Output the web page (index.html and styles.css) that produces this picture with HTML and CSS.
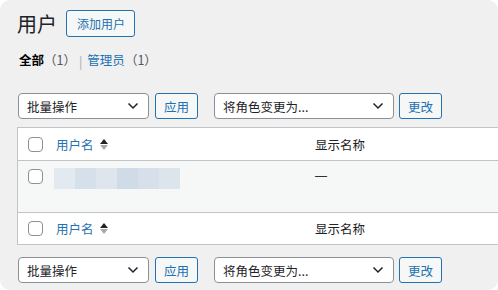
FILE: index.html
```html
<!DOCTYPE html>
<html lang="zh-CN">
<head>
    <meta charset="UTF-8">
    <title>用户</title>
    <link rel="stylesheet" href="styles.css">
</head>
<body>
    <div class="screen">
        <div class="heading">
            <h1>用户</h1>
            <a class="page-action" href="#">添加用户</a>
        </div>

        <ul class="views">
            <li class="current">全部<span class="count">（1）</span></li>
            <li class="sep">|</li>
            <li><a href="#">管理员<span class="count">（1）</span></a></li>
        </ul>

        <div class="tablenav">
            <div class="select bulk">
                <span>批量操作</span>
                <svg width="12" height="8" viewBox="0 0 12 8"><path d="M1.5 1.5 6 6l4.5-4.5" fill="none" stroke="#1d2327" stroke-width="1.5"/></svg>
            </div>
            <button class="btn">应用</button>
            <div class="select role">
                <span>将角色变更为...</span>
                <svg width="12" height="8" viewBox="0 0 12 8"><path d="M1.5 1.5 6 6l4.5-4.5" fill="none" stroke="#1d2327" stroke-width="1.5"/></svg>
            </div>
            <button class="btn">更改</button>
        </div>

        <div class="table">
            <div class="row head">
                <div class="cell check"><span class="box"></span></div>
                <div class="cell name"><a href="#">用户名</a><span class="sort"><i class="up"></i><i class="down"></i></span></div>
                <div class="cell display">显示名称</div>
            </div>
            <div class="row item">
                <div class="cell check"><span class="box"></span></div>
                <div class="cell name">
                    <div class="blur">
                        <span style="background:#e3e9f0"></span>
                        <span style="background:#d6e0ea"></span>
                        <span style="background:#dfe5ed"></span>
                        <span style="background:#cfdbe7"></span>
                        <span style="background:#d7e0ea"></span>
                        <span style="background:#dce4ec"></span>
                    </div>
                </div>
                <div class="cell display"><span class="dash">—</span></div>
            </div>
            <div class="row foot">
                <div class="cell check"><span class="box"></span></div>
                <div class="cell name"><a href="#">用户名</a><span class="sort"><i class="up"></i><i class="down"></i></span></div>
                <div class="cell display">显示名称</div>
            </div>
        </div>

        <div class="tablenav bottom">
            <div class="select bulk">
                <span>批量操作</span>
                <svg width="12" height="8" viewBox="0 0 12 8"><path d="M1.5 1.5 6 6l4.5-4.5" fill="none" stroke="#1d2327" stroke-width="1.5"/></svg>
            </div>
            <button class="btn">应用</button>
            <div class="select role">
                <span>将角色变更为...</span>
                <svg width="12" height="8" viewBox="0 0 12 8"><path d="M1.5 1.5 6 6l4.5-4.5" fill="none" stroke="#1d2327" stroke-width="1.5"/></svg>
            </div>
            <button class="btn">更改</button>
        </div>
    </div>
</body>
</html>
```

FILE: styles.css
```css
:root {
    --wp-blue: #2271b1;
    --wp-border: #c3c4c7;
    --wp-input: #8c8f94;
    --wp-text: #1d2327;
    --wp-bg: #f0f0f1;
}

* {
    margin: 0;
    padding: 0;
    box-sizing: border-box;
    font-family: "Noto Sans CJK SC", "Noto Sans", sans-serif;
}

body {
    background: #ffffff;
    width: 498px;
    height: 290px;
    overflow: hidden;
}

.screen {
    width: 498px;
    height: 290px;
    background: var(--wp-bg);
    border-radius: 10px;
    overflow: hidden;
    padding: 10px 0 0 17px;
    color: var(--wp-text);
    font-size: 13px;
}

.heading {
    display: flex;
    align-items: center;
    gap: 9px;
    height: 27px;
}

h1 {
    font-size: 20px;
    font-weight: 400;
    line-height: 27px;
}

.page-action {
    display: inline-flex;
    align-items: center;
    height: 27px;
    padding: 0 9px 0 10px;
    border: 1px solid var(--wp-blue);
    border-radius: 3px;
    background: #f6f7f7;
    color: var(--wp-blue);
    text-decoration: none;
    font-size: 12px;
}

.views {
    list-style: none;
    display: flex;
    align-items: center;
    margin-top: 12px;
    height: 20px;
    padding-left: 2px;
}

.views li {
    font-size: 12.5px;
    color: var(--wp-blue);
}

.views .current {
    color: #000;
    font-weight: 700;
}

.views a {
    color: var(--wp-blue);
    text-decoration: none;
}

.views .sep {
    color: #a7aaad;
    margin: 3px 5px 0 3px;
}

.count {
    color: #50575e;
    font-weight: 400;
}

.tablenav {
    display: flex;
    align-items: center;
    margin-top: 24px;
    padding-left: 1px;
    height: 26px;
}

.tablenav.bottom {
    margin-top: 12px;
}

.select {
    display: flex;
    align-items: center;
    justify-content: space-between;
    height: 26px;
    padding: 0 9px 0 8px;
    border: 1px solid var(--wp-input);
    border-radius: 4px;
    background: #fff;
    font-size: 12.5px;
}

.select.bulk {
    width: 131px;
}

.select.role {
    width: 180px;
    margin-left: 16px;
}

.btn {
    height: 26px;
    width: 43px;
    margin-left: 6px;
    padding: 0;
    border: 1px solid var(--wp-blue);
    border-radius: 3px;
    background: #f6f7f7;
    color: var(--wp-blue);
    font-size: 12.5px;
}

.select.role + .btn {
    margin-left: 5px;
}

.table {
    width: 620px;
    margin-top: 8px;
    border: 1px solid var(--wp-border);
    background: #fff;
}

.row {
    display: flex;
    align-items: center;
}

.row.head {
    height: 33px;
    border-bottom: 1px solid var(--wp-border);
}

.row.item {
    height: 51px;
    align-items: flex-start;
    padding-top: 7px;
    background: #f6f7f7;
}

.row.foot {
    height: 32px;
    border-top: 1px solid var(--wp-border);
}

.cell {
    font-size: 12.5px;
}

.cell.check {
    width: 38px;
    padding-left: 10px;
    display: flex;
}

.item .cell.check {
    padding-top: 1px;
}

.box {
    width: 15px;
    height: 15px;
    border: 1px solid var(--wp-input);
    border-radius: 4px;
    background: #fff;
}

.cell.name {
    width: 259px;
    display: flex;
    align-items: center;
}

.cell.name a {
    color: var(--wp-blue);
    text-decoration: none;
}

.sort {
    display: flex;
    flex-direction: column;
    gap: 1px;
    margin-left: 6px;
}

.sort i {
    width: 0;
    height: 0;
    border-left: 4px solid transparent;
    border-right: 4px solid transparent;
}

.sort .up {
    border-bottom: 5px solid #1d2327;
}

.sort .down {
    border-top: 5px solid #a7aaad;
}

.blur {
    display: flex;
    width: 126px;
    height: 21px;
    margin: 0 0 0 -2px;
}

.blur span {
    flex: 1;
}

.dash {
    display: block;
    font-family: "Liberation Sans", sans-serif;
    font-size: 12px;
    line-height: 16px;
    color: #2c3338;
}
```
